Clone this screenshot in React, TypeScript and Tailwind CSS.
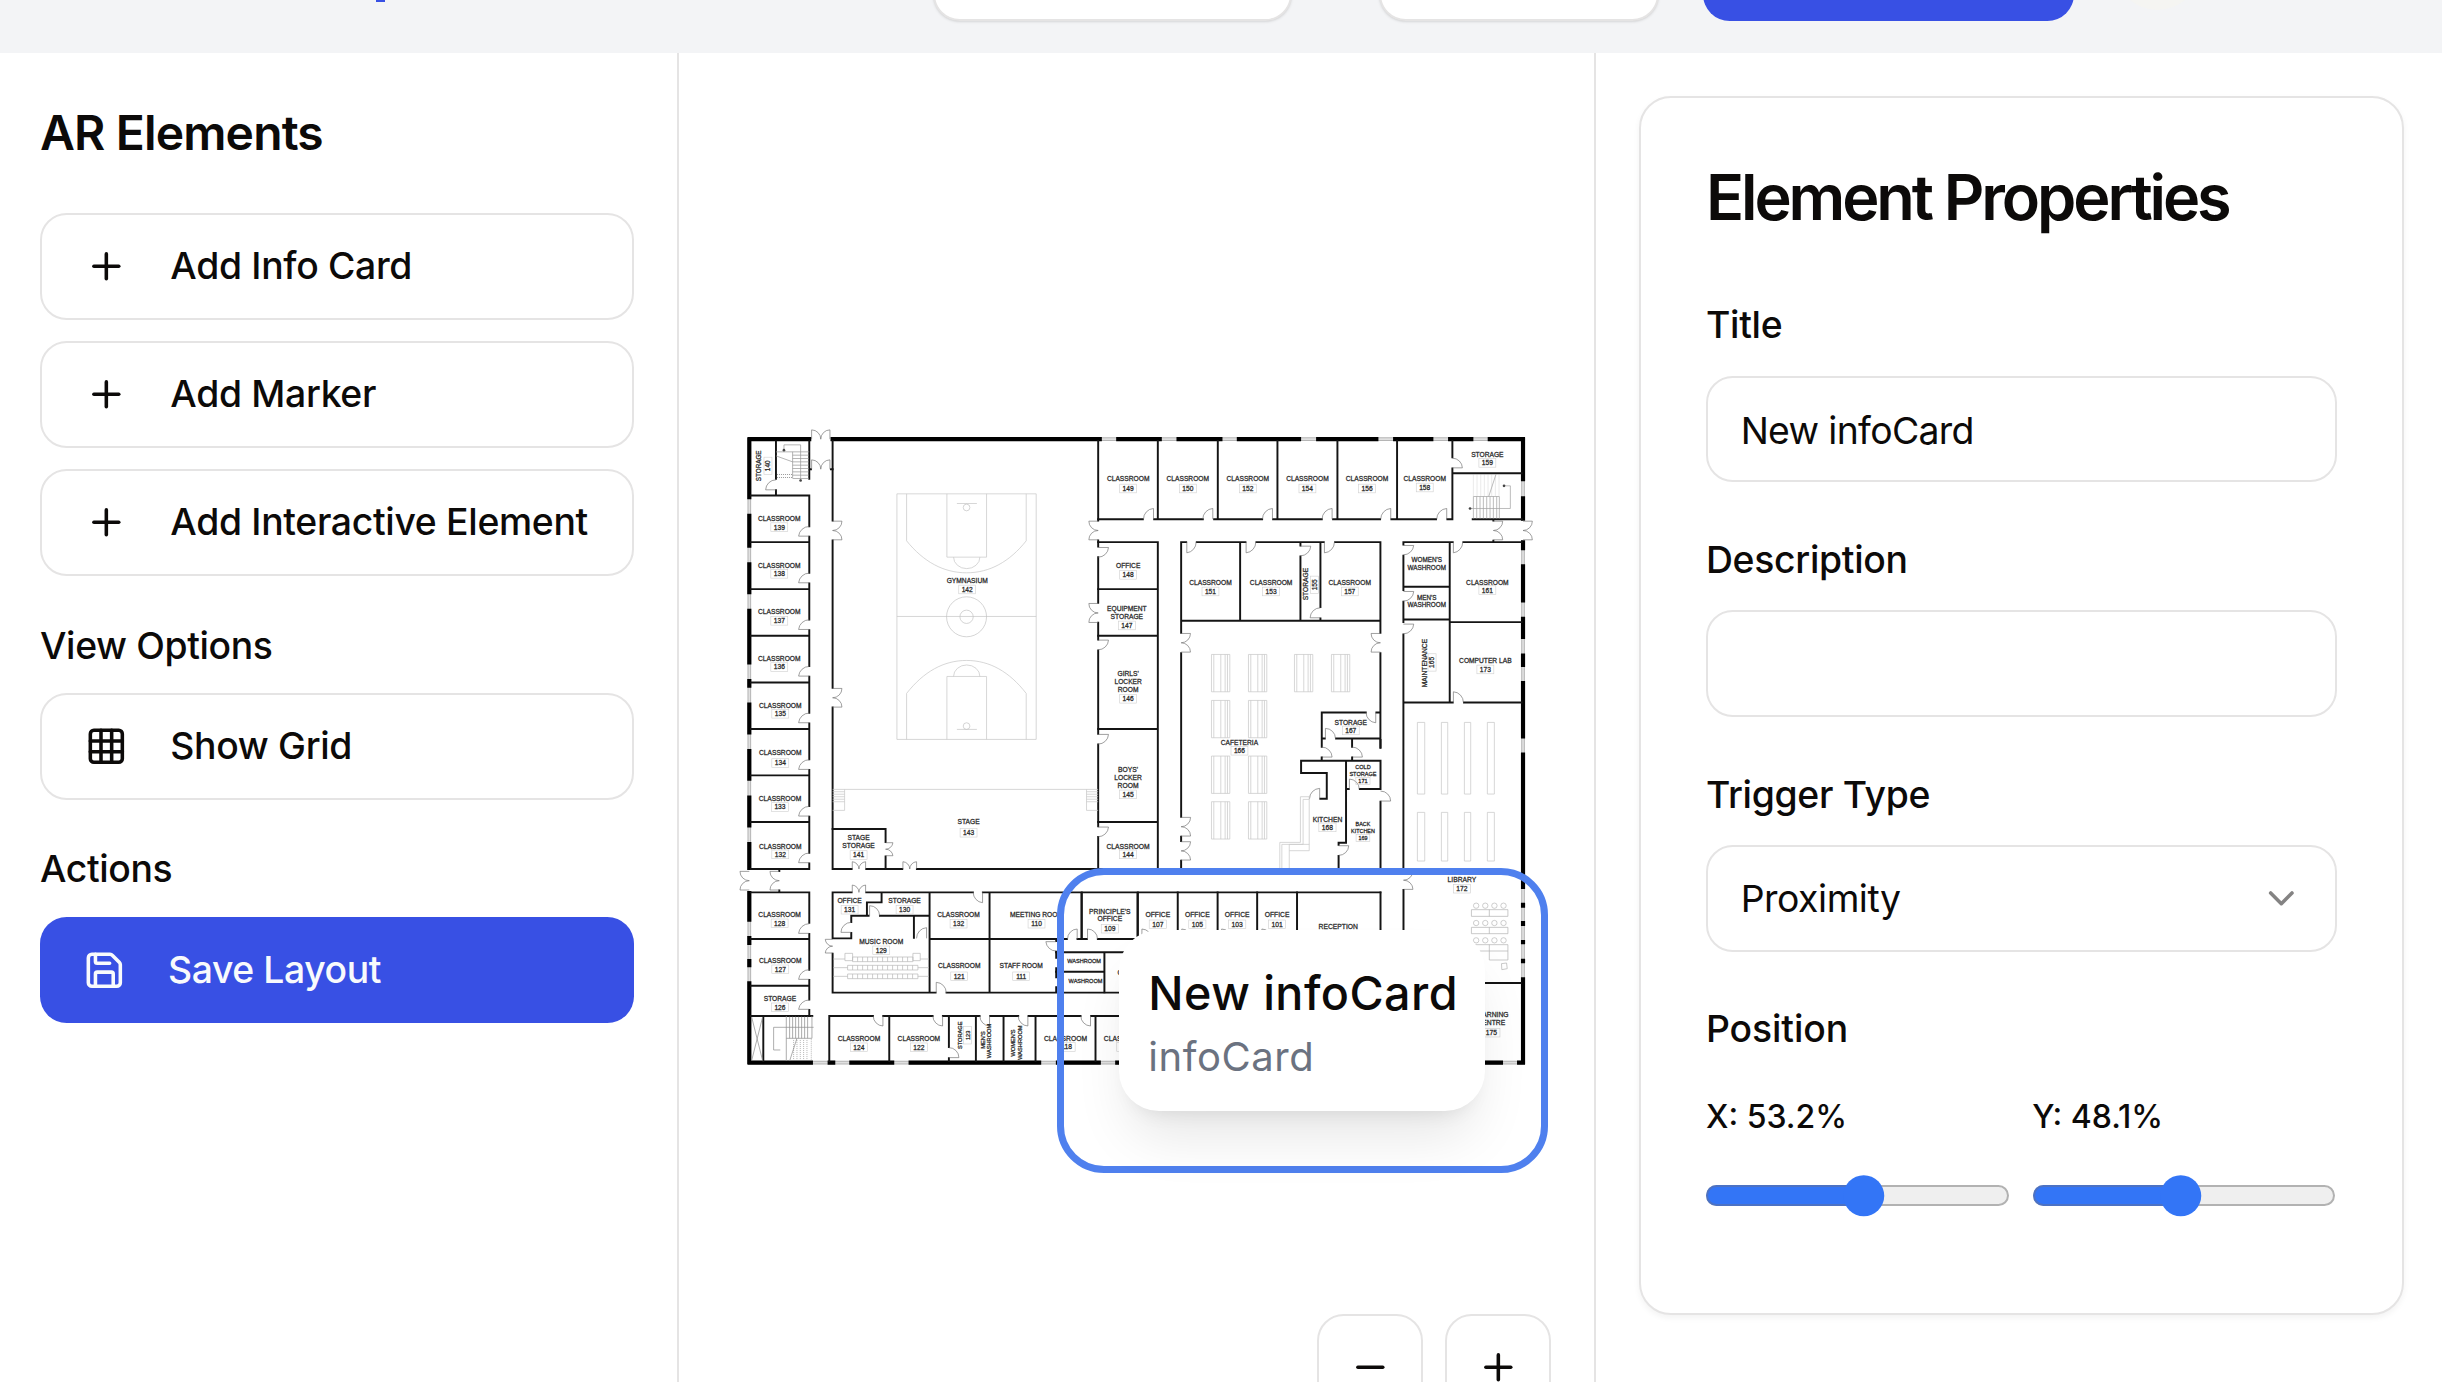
import React from "react";
import { ChevronDown, Grid3x3, Minus, Plus, Save } from "lucide-react";

type DoorSpec = [number, number, number, number, number, number];
type LabelSpec = { x: number; y: number[]; t: string[]; n?: string; ny?: number; nx?: number; s?: number; v?: boolean };

/* hinge (x, y), leaf vector (a, b), closing vector (c, d) */
const doorPath = ([x, y, a, b, c, d]: DoorSpec) => {
  const r = Math.max(Math.abs(a), Math.abs(b));
  const sweep = a * d - b * c > 0 ? 1 : 0;
  return `M${x} ${y}l${a} ${b}A${r} ${r} 0 0 ${sweep} ${x + c} ${y + d}`;
};
const doubleV = (x: number, y1: number, y2: number, dx: number): DoorSpec[] => {
  const h = (y2 - y1) / 2;
  return [
    [x, y1, dx, 0, 0, h],
    [x, y2, dx, 0, 0, -h],
  ];
};
const doubleH = (y: number, x1: number, x2: number, dy: number): DoorSpec[] => {
  const h = (x2 - x1) / 2;
  return [
    [x1, y, 0, dy, h, 0],
    [x2, y, 0, dy, -h, 0],
  ];
};

function Doors({ list }: { list: DoorSpec[] }) {
  return <path d={list.map(doorPath).join("")} fill="none" stroke="#6f6f6f" strokeWidth="2" />;
}
function Walls({ d }: { d: string }) {
  return <path d={d} fill="none" stroke="#141414" strokeWidth="5.8" strokeLinecap="square" />;
}
function Thin({ d, c = "#c8c8c8" }: { d: string; c?: string }) {
  return <path d={d} fill="none" stroke={c} strokeWidth="2.2" />;
}
function Labels({ list }: { list: LabelSpec[] }) {
  return (
    <g fill="#2b2b2b" stroke="#2b2b2b" strokeWidth="0.8" textAnchor="middle" fontFamily='"Liberation Sans", Arial, sans-serif'>
      {list.map((l, i) => {
        const s = l.s ?? 20;
        if (l.v) {
          return (
            <g key={i} fontSize={s}>
              {l.t.map((t, k) => (
                <text key={k} transform={`translate(${l.x + k * 20 + 7} ${l.y[k]}) rotate(-90)`}>{t}</text>
              ))}
              {l.n && (
                <>
                  <rect x={l.nx! - 12} y={l.ny! - 26} width="24" height="52" fill="none" stroke="#cfcfcf" strokeWidth="1.8" />
                  <text transform={`translate(${l.nx! + 7} ${l.ny!}) rotate(-90)`}>{l.n}</text>
                </>
              )}
            </g>
          );
        }
        return (
          <g key={i} fontSize={s}>
            {l.t.map((t, k) => (
              <text key={k} x={l.x} y={l.y[k] + s * 0.36}>{t}</text>
            ))}
            {l.n && (
              <>
                <rect x={(l.nx ?? l.x) - s * 1.27} y={l.ny! - s * 0.65} width={s * 2.54} height={s * 1.3} fill="none" stroke="#cfcfcf" strokeWidth="1.8" />
                <text x={l.nx ?? l.x} y={l.ny! + s * 0.36}>{l.n}</text>
              </>
            )}
          </g>
        );
      })}
    </g>
  );
}

const room = (x: number, y: number, n: string, ny: number, t = "CLASSROOM"): LabelSpec => ({ x, y: [y], t: [t], n, ny });

const westDoorYs = [348, 488, 628, 768, 908, 1048, 1188, 1328];
const seatRow = (x1: number, x2: number, y: number) => {
  let d = `M${x1} ${y}H${x2}V${y + 14}H${x1}Z`;
  for (let x = x1 + 15; x < x2 - 4; x += 15) d += `M${x} ${y}v14`;
  return d;
};
const table = (x: number, y: number) => `M${x} ${y}h55v112h-55zM${x + 7} ${y}v112M${x + 28} ${y}v112M${x + 41} ${y}v112M${x + 48} ${y}v112`;
const box = (x1: number, y1: number, x2: number, y2: number) => `M${x1} ${y1}H${x2}V${y2}H${x1}Z`;
const repeat = (n: number, f: (i: number) => string) => Array.from({ length: n }, (_, i) => f(i)).join("");

function FloorPlan() {
  return (
    <svg className="block size-full" viewBox="678.67 52.67 915.33 1329.33" preserveAspectRatio="xMinYMin meet">
      <g transform="translate(730 420) scale(0.333333)">
        {/* exterior: glazing underneath, solid runs on top */}
        <path d="M57 52V1350M57 1413V1933M300 57H2385M2379 52V300M2379 360V1933M52 1928H2385" fill="none" stroke="#b5b5b5" strokeWidth="11" />
        <path d="M57 52V1350M57 1413V1933M300 57H2385M2379 52V300M2379 360V1933M52 1928H2385" fill="none" stroke="#e0e0e0" strokeWidth="5" />
        <path
          d="M57 52V237M57 281V383M57 426V522M57 566V733M57 777V803M57 847V943M57 987V1082M57 1126V1222M57 1266V1350M57 1413V1505M57 1548V1575M57 1617V1642M57 1684V1933M52 57H243M301 57H1115M1158 57H1295M1339 57H1477M1520 57H1713M1758 57H1945M1989 57H2110M2154 57H2230M2273 57H2385M2379 52V183M2379 228V302M2379 360V390M2379 432V547M2379 590V657M2379 700V741M2379 783V955M2379 997V1407M2379 1448V1463M2379 1503V1518M2379 1560V1573M2379 1616V1630M2379 1672V1933M52 1928H248M292 1928H315M357 1928H492M535 1928H933M977 1928H1112M1155 1928H2319M2361 1928H2385"
          fill="none"
          stroke="#000"
          strokeWidth="12.5"
        />

        {/* west wing */}
        <Walls d="M237 62V176M137 64V176M137 210V226M62 226H237M62 366H237M62 507H237M62 647H237M62 787H237M62 927H237M62 1066H237M62 1206H237M62 1347H237M237 226V318M237 350V458M237 490V598M237 630V738M237 770V878M237 910V1018M237 1050V1158M237 1190V1298M237 1330V1347M237 147H242M302 147H307" />
        <Doors list={westDoorYs.map((y) => [237, y, -32, 0, 0, -29] as DoorSpec)} />
        <Doors list={[[137, 209, -31, 0, 0, -30], ...doubleH(57, 244, 299, -28), ...doubleH(147, 244, 299, -28)]} />
        <Thin c="#9a9a9a" d={"M137 95H237M187 95V174" + repeat(8, (i) => `M187 ${105 + i * 10}H235`) + "M161 90V74H211V180M137 107L187 125"} />
        <path d="M140 163H187M140 172H187" stroke="#666" strokeWidth="2" strokeDasharray="3 3" />
        <circle cx="211" cy="181" r="4" fill="#444" />
        <circle cx="161" cy="90" r="4" fill="#444" />
        <Labels
          list={[
            { x: 85, y: [137], t: ["STORAGE"], n: "140", nx: 113, ny: 137, v: true, s: 19 },
            room(147, 296, "139", 321), room(147, 435, "138", 461), room(147, 575, "137", 602), room(147, 716, "136", 741),
            room(150, 856, "135", 881), room(150, 997, "134", 1029), room(149, 1136, "133", 1161), room(150, 1279, "132", 1303),
          ]}
        />

        {/* gymnasium */}
        <Walls d="M307 62V301M307 361V803M307 862V1347M307 1347H364M408 1347H516M560 1347H1284M1104 62V301M1104 361V379M1104 411V548M1104 608V658M1104 691V941M1104 973V1219M1104 1251V1347" />
        <Doors list={[...doubleV(307, 303, 359, 28), ...doubleV(307, 805, 861, 28), ...doubleV(1104, 303, 359, -28), ...doubleV(1104, 550, 607, -28), [1104, 382, 31, 0, 0, 29], [1104, 660, 31, 0, 0, 29], [1104, 943, 31, 0, 0, 29], [1104, 1221, 31, 0, 0, 29]]} />
        <Thin d="M500 221H918V958H500ZM500 589H918M650 221V411H769V221M650 958V769H769V958M529 221V362C580 425 640 458 709 458S838 425 888 362V221M529 958V820C580 755 640 721 709 721S838 755 888 820V958M670 411A39 34 0 0 0 749 411M670 769A39 34 0 0 1 749 769M680 250H740M680 928H740" />
        <g fill="none" stroke="#c0c0c0" strokeWidth="2">
          <circle cx="709" cy="590" r="60" />
          <circle cx="709" cy="590" r="20" />
          <circle cx="709" cy="262" r="10" />
          <circle cx="709" cy="918" r="10" />
        </g>
        <Labels list={[room(711, 480, "142", 508, "GYMNASIUM")]} />

        {/* stage and south-west rooms */}
        <g transform="translate(0 960)">
          <Thin d={"M307 148H1104M343 148V211H307M1069 148V211H1104" + repeat(5, (i) => `M307 ${155 + i * 7.5}H343M1069 ${155 + i * 7.5}H1104`)} />
          <Walls d="M307 267H466V306M466 349V387M62 457H237V548M237 582V689M237 720V779M237 810V828M62 597H237M62 737H237M62 828H246M99 828V963M307 457H364M408 457H728M758 457H1951M307 457V595H363V579M363 546V527H415M410 527V487H454V457M449 527H598M551 527V593M307 641V758H616M649 758H1170M598 457V758M778 457V758M598 597H1010M1042 597H1070M1103 597H1217M1054 457V597M1222 457V590M978 598V603M978 635V653M978 685V712M978 742V758" />
          <Walls d="M297 963V828H428M459 828H607M638 828H748M780 828H820V963M820 828H864M895 828H1051M1083 828H1170M477 828V963M656 828V921M656 955V963M737 828V963M916 828V963M1096 828V963M147 390V393M147 451V455" />
          <Doors
            list={[
              ...doubleV(466, 308, 347, 22), ...doubleH(387, 366, 406, -22), ...doubleH(387, 518, 559, -22), ...doubleH(457, 366, 406, -22),
              ...doubleV(57, 394, 450, -28), ...doubleV(147, 394, 450, -28), ...doubleV(307, 598, 639, -22),
              [237, 580, -32, 0, 0, -29], [237, 718, -32, 0, 0, -29], [237, 808, -32, 0, 0, -28], [757, 457, 0, 31, -28, 0],
              [363, 577, -31, 0, 0, -30], [418, 527, 0, -30, 30, 0], [589, 595, 0, -32, -30, 0], [618, 758, 0, -31, 30, 0],
              [978, 605, -31, 0, 0, 28], [1041, 597, 0, -30, -29, 0], [1072, 597, 0, -30, 30, 0],
              [458, 828, 0, 30, -29, 0], [637, 828, 0, 30, -29, 0], [778, 828, 0, 30, -29, 0], [893, 828, 0, 30, -29, 0],
              [1081, 828, 0, 30, -29, 0], [656, 953, 30, 0, 0, -30],
            ]}
          />
          <Thin c="#8f8f8f" d={"M64 831L97 962M97 831L64 962M168 828V963M168 895H245M245 828V895M200 895L178 963M130 930V862H250M130 930H150" + repeat(7, (i) => `M${178 + i * 9} 830V895`)} />
          <path d="M190 900V963M200 900V963M210 900V963M220 900V963M230 900V963M243 898V963" stroke="#777" strokeWidth="1.6" strokeDasharray="3 3" />
          <Thin d={seatRow(367, 548, 651) + seatRow(352, 563, 676) + seatRow(352, 563, 702) + "M344 640H367V662H344ZM548 640H570V662H548ZM309 657H344M570 657H596M309 683H352M563 683H596M309 709H352M563 709H596"} c="#bbb" />
          <Labels
            list={[
              room(715, 246, "143", 278, "STAGE"),
              { x: 385, y: [294, 318], t: ["STAGE", "STORAGE"], n: "141", ny: 345 },
              room(148, 525, "128", 550), room(150, 661, "127", 688), room(149, 776, "126", 802, "STORAGE"),
              room(358, 483, "131", 509, "OFFICE"), room(523, 483, "130", 509, "STORAGE"), room(685, 525, "132", 551),
              room(919, 525, "110", 551, "MEETING ROOM"), room(453, 606, "129", 631, "MUSIC ROOM"), room(687, 678, "121", 709),
              room(873, 678, "111", 709, "STAFF ROOM"), room(386, 897, "124", 922), room(566, 897, "122", 922),
              { x: 689, y: [886], t: ["STORAGE"], n: "123", nx: 712, ny: 886, v: true, s: 17 },
              { x: 756, y: [900, 903], t: ["MEN'S", "WASHROOM"], v: true, s: 17 },
              { x: 848, y: [909, 908], t: ["WOMEN'S", "WASHROOM"], v: true, s: 17 },
            ]}
          />
        </g>

        {/* north-east rooms */}
        <g transform="translate(1050 0)">
          <Walls d="M54 297H188M222 297H368M402 297H546M579 297H725M759 297H900M934 297H1068M1102 297H1117V145M1117 111V62M233 62V297M413 62V297M592 62V297M772 62V297M951 62V297M1117 159H1325M1178 297H1325M1240 297V301M1240 362V366M54 366H233V1347M54 507H233M54 647H233M54 927H233M54 1206H233" />
          <Walls d="M303 366H318M350 366H496M529 366H731M765 366H901V638M303 366V638M303 699V1190M480 366V602M661 366V376M661 409V602M721 366V561M721 595V602M303 602H901M901 699V983M970 366H1118M1150 366H1325M970 366V373M970 407V510M970 545V606M970 643V1350M1109 366V847M970 500H1109M970 598H1109M1109 606H1325M970 847H1118M1152 847H1325M725 980V877H857M889 877H901M725 955H734M768 955H901M816 955V980" />
          <Doors
            list={[
              ...[220, 398, 577, 756, 932, 1100].map((x) => [x, 297, 0, -32, -30, 0] as DoorSpec),
              [1117, 143, 30, 0, 0, -29], [320, 366, 0, 32, 28, 0], [498, 366, 0, 32, 29, 0], [733, 366, 0, 32, 30, 0],
              [661, 378, 31, 0, 0, 29], [721, 593, -31, 0, 0, -30], [970, 376, 31, 0, 0, 28], [970, 514, 31, 0, 0, 29], [970, 612, 31, 0, 0, 29],
              [1120, 366, 0, 32, 28, 0], [1120, 847, 0, -32, 30, 0], [887, 877, 0, 31, -29, 0], [736, 955, 0, -30, 30, 0],
              [725, 1011, 31, 0, 0, -30], [816, 1011, 31, 0, 0, -30],
              ...doubleV(303, 640, 696, 28), ...doubleV(901, 640, 696, -28), ...doubleV(1240, 303, 359, 28), ...doubleV(1329, 303, 359, 28),
            ]}
          />
          <Thin
            d={
              [[394, 703], [505, 703], [643, 703], [754, 703], [394, 841], [505, 841], [394, 1008], [505, 1008], [394, 1145], [505, 1145]].map(([x, y]) => table(x, y)).join("") +
              [[1012, 1034], [1084, 1103], [1153, 1172], [1222, 1243]].map(([a, b]) => box(a, 907, b, 1122) + box(a, 1177, b, 1323)).join("")
            }
          />
          <Thin c="#a5a5a5" d={"M1180 229H1258V295M1180 229V295M1170 265H1291V197H1272M1248 162L1226 229" + repeat(7, (i) => `M${1190 + i * 10} 229V295`)} />
          <path d={repeat(8, (i) => `M${1180 + i * 11} 163V229`)} stroke="#b0b0b0" strokeWidth="1.6" strokeDasharray="3 3" />
          <circle cx="1170" cy="265" r="4" fill="#444" />
          <circle cx="1272" cy="197" r="4" fill="#444" />
          <Labels
            list={[
              room(144, 175, "149", 205), room(323, 175, "150", 205), room(503, 175, "152", 205), room(682, 176, "154", 205),
              room(861, 175, "156", 205), room(1034, 175, "158", 202), room(1222, 103, "159", 128, "STORAGE"),
              room(144, 436, "148", 464, "OFFICE"), { x: 140, y: [566, 589], t: ["EQUIPMENT", "STORAGE"], n: "147", ny: 616 },
              { x: 144, y: [762, 786, 809], t: ["GIRLS'", "LOCKER", "ROOM"], n: "146", ny: 836 },
              room(391, 486, "151", 514), room(573, 486, "153", 514), room(809, 486, "157", 514),
              { x: 677, y: [492], t: ["STORAGE"], n: "155", nx: 703, ny: 494, v: true },
              { x: 1040, y: [420, 444], t: ["WOMEN'S", "WASHROOM"], s: 19 }, { x: 1040, y: [532, 555], t: ["MEN'S", "WASHROOM"], s: 19 },
              room(1222, 486, "161", 510), room(1216, 722, "173", 748, "COMPUTER LAB"),
              { x: 1033, y: [729], t: ["MAINTENANCE"], n: "165", nx: 1056, ny: 727, v: true },
              room(812, 909, "167", 931, "STORAGE"), room(478, 968, "166", 992, "CAFETERIA"),
            ]}
          />
        </g>

        {/* kitchen, offices and library */}
        <g transform="translate(930 960) scale(1.0142 1)">
          <Walls d="M417 290V303M417 362V387M772 62H1007V147H946M772 62V99H848V176H829M905 62V308H883V314M905 147H913M883 348V387M1007 0V22M833 52V62M923 52V62M1007 185V387M1075 450V572M123 457V597M289 457V590M407 457V600M525 457V600M642 457V600M760 457V600M1007 457V600M1316 729H1422M47 637H250M47 695H190M190 637V757" />
          <Doors list={[...doubleV(417, 232, 288, 28), ...doubleV(417, 305, 360, 28), ...doubleV(1075, 393, 448, 28), [827, 176, 0, -31, -30, 0], [915, 147, 0, -30, 29, 0], [883, 317, 30, 0, 0, 29], [1007, 183, 30, 0, 0, -30], [301, 597, 0, -30, 29, 0], [419, 597, 0, -30, 29, 0], [537, 597, 0, -30, 29, 0], [656, 597, 0, -30, 29, 0]]} />
          <Thin d="M770 170H796V332H737M770 170V307H709V387M778 178V313H715V387M737 313V387M737 313H796M778 178H796" />
          <Thin c="#b5b5b5" d="M1276 509H1384V529H1276ZM1329 509V529M1276 562H1384V581H1276ZM1329 562V581M1280 614H1384V660H1329V614M1300 633H1384M1365 671L1380 669L1382 686L1366 689Z" />
          <g fill="none" stroke="#b5b5b5" strokeWidth="2">
            {[497, 549, 601].flatMap((y) => [1290, 1317, 1344, 1371].map((x) => <circle key={`${x}-${y}`} cx={x} cy={y} r="8" />))}
          </g>
          <Labels
            list={[
              { x: 260, y: [88, 112, 136], t: ["BOYS'", "LOCKER", "ROOM"], n: "145", ny: 163 },
              room(260, 319, "144", 343),
              { x: 955, y: [82, 101], t: ["COLD", "STORAGE"], n: "171", ny: 123, s: 16.5 },
              room(850, 239, "168", 262, "KITCHEN"),
              { x: 955, y: [252, 272], t: ["BACK", "KITCHEN"], n: "169", ny: 294, s: 16 },
              room(1248, 420, "172", 446, "LIBRARY"),
              { x: 206, y: [514, 537], t: ["PRINCIPLE'S", "OFFICE"], n: "109", ny: 566 },
              room(348, 525, "107", 553, "OFFICE"), room(465, 525, "105", 553, "OFFICE"), room(583, 525, "103", 553, "OFFICE"), room(701, 525, "101", 553, "OFFICE"),
              { x: 882, y: [561], t: ["RECEPTION"] },
              { x: 130, y: [662], t: ["WASHROOM"], s: 16.5 }, { x: 134, y: [723], t: ["WASHROOM"], s: 16.5 },
              { x: 75, y: [897], t: ["CLASSROOM"], n: "118", nx: 78, ny: 921 },
              { x: 252, y: [897], t: ["CLASSROOM"], n: "116", ny: 921 },
              { x: 236, y: [697], t: ["C"] },
              { x: 1335, y: [825, 849], t: ["LEARNING", "CENTRE"], n: "175", ny: 878 },
            ]}
          />
        </g>
      </g>
    </svg>
  );
}

const iconClass = "size-[42.67px] shrink-0";
const outline = "border-2 border-[#e5e4e4] bg-white rounded-[26.67px]";

function SideButton({ icon, children }: { icon: React.ReactNode; children: React.ReactNode }) {
  return (
    <button className={`flex h-[106.67px] w-full items-center gap-[42.67px] px-[43px] text-[37.33px] font-medium tracking-[-0.32px] whitespace-nowrap ${outline}`}>
      {icon}
      <span>{children}</span>
    </button>
  );
}

function Field({ label, children }: { label: string; children: React.ReactNode }) {
  return (
    <div className="mb-[42.67px] h-[192px]">
      <div className="h-[85.33px] pt-[8px] text-[37.33px] leading-[53.33px] font-medium tracking-[-0.3px]">{label}</div>
      {children}
    </div>
  );
}

function Slider({ label, value }: { label: string; value: number }) {
  return (
    <div className="flex-1">
      <div className="text-[32px] leading-[42.67px] font-medium">{label}</div>
      <div className="relative mt-[46px] ml-[0.5px] h-[21.33px] w-[302.5px] overflow-visible rounded-full border-2 border-[#b2b2b2] bg-[#efefef]">
        <div className="absolute -inset-y-[2px] -left-[2px] rounded-l-full border-2 border-r-0 border-[#4c72c4] bg-[#3375f6]" style={{ width: value }} />
        <div className="absolute top-1/2 size-[41.5px] -translate-x-1/2 -translate-y-1/2 rounded-full bg-[#3375f6]" style={{ left: value - 2 }} />
      </div>
    </div>
  );
}

export default function App() {
  return (
    <div className="flex h-[1382px] w-[2442px] flex-col overflow-hidden bg-white font-['Inter',sans-serif] text-[#0c0a09]">
      <header className="h-[52.67px] shrink-0 overflow-hidden bg-[#f3f4f6]">
        <div className="-mt-[86px] flex h-[106.67px] items-center">
          <div className="mb-[18.67px] ml-[376px] h-[10px] w-[9px] self-end bg-[#3850e4]" />
          <div className={`ml-[548px] h-full w-[358.5px] shadow-sm ${outline}`} />
          <div className={`ml-[87px] h-full w-[280.5px] shadow-sm ${outline}`} />
          <div className="ml-[44px] h-full w-[371px] rounded-[26.67px] bg-[#3850e4]" />
          <div className="ml-[41px] size-[85.33px] rounded-full bg-[#f5f5f2]" />
        </div>
      </header>

      <div className="flex min-h-0 flex-1">
        <aside className="w-[679px] shrink-0 border-r-2 border-[#e5e4e4] pt-[42.67px] pr-[43px] pl-[40px]">
          <h2 className="mt-[1px] text-[48px] leading-[74.67px] font-semibold tracking-[-0.85px]">AR Elements</h2>
          <div className="mt-[42px] flex flex-col gap-[21.33px]">
            <SideButton icon={<Plus className={iconClass} />}>Add Info Card</SideButton>
            <SideButton icon={<Plus className={iconClass} />}>Add Marker</SideButton>
            <SideButton icon={<Plus className={iconClass} />}>Add Interactive Element</SideButton>
          </div>
          <h3 className="mt-[43px] text-[37.33px] leading-[53.33px] font-medium tracking-[-0.37px]">View Options</h3>
          <div className="mt-[21px]">
            <SideButton icon={<Grid3x3 className={iconClass} />}>Show Grid</SideButton>
          </div>
          <h3 className="mt-[42.67px] text-[37.33px] leading-[53.33px] font-medium tracking-[-0.37px]">Actions</h3>
          <button className="mt-[21px] flex h-[106.67px] w-full items-center gap-[42.67px] rounded-[26.67px] bg-[#3850e4] px-[42.67px] text-[37.33px] font-medium tracking-[-0.4px] text-[#f8fafc]">
            <Save className={iconClass} />
            <span>Save Layout</span>
          </button>
        </aside>

        <main className="relative w-[915px] shrink-0 overflow-hidden">
          <FloorPlan />
          <div className="absolute top-[815.33px] left-[378px] h-[305.33px] w-[490.67px] rounded-[47px] border-[7px] border-[#4f80ee] p-[55.33px]">
            <div className="size-full rounded-[40px] bg-white pt-[30px] pl-[29px] whitespace-nowrap shadow-[0_35px_55px_-11px_rgba(0,0,0,0.1),0_13px_20px_-13px_rgba(0,0,0,0.1)]">
              <div className="text-[46.67px] leading-[66.67px] font-medium tracking-[0.45px]">New infoCard</div>
              <div className="text-[40px] leading-[60px] tracking-[0.55px] text-[#6b7280]">infoCard</div>
            </div>
          </div>
          <div className="absolute top-[1261px] right-[42.67px] flex gap-[21.33px]">
            <button className={`flex size-[106.67px] items-center justify-center ${outline}`}>
              <Minus className={iconClass} />
            </button>
            <button className={`flex size-[106.67px] items-center justify-center ${outline}`}>
              <Plus className={iconClass} />
            </button>
          </div>
        </main>

        <aside className="w-[853px] shrink-0 border-l-2 border-[#e5e4e4] px-[43.33px] pt-[43.33px]">
          <section className="h-[1219px] rounded-[32px] border-2 border-[#e5e4e4] bg-white px-[64.67px] pt-[64px] shadow-[0_3px_6px_rgba(0,0,0,0.05)]">
            <h2 className="text-[63px] leading-[70px] font-semibold tracking-[-3.1px] whitespace-nowrap">Element Properties</h2>
            <div className="mt-[58.5px]">
              <Field label="Title">
                <div className={`flex h-[106.67px] items-center px-[32.67px] pt-[4px] text-[37.33px] tracking-[-0.65px] ${outline}`}>New infoCard</div>
              </Field>
              <Field label="Description">
                <div className={`h-[106.67px] ${outline}`} />
              </Field>
              <Field label="Trigger Type">
                <div className={`flex h-[106.67px] items-center justify-between px-[32.67px] text-[37.33px] tracking-[-0.45px] ${outline}`}>
                  <span className="pt-[2px]">Proximity</span>
                  <ChevronDown className="size-[42.67px] opacity-50" />
                </div>
              </Field>
              <div className="pt-[8px] text-[37.33px] leading-[53.33px] font-medium tracking-[-0.1px]">Position</div>
              <div className="mt-[40.5px] flex gap-[21.33px]">
                <Slider label="X: 53.2%" value={157.5} />
                <Slider label="Y: 48.1%" value={148} />
              </div>
            </div>
          </section>
        </aside>
      </div>
    </div>
  );
}
